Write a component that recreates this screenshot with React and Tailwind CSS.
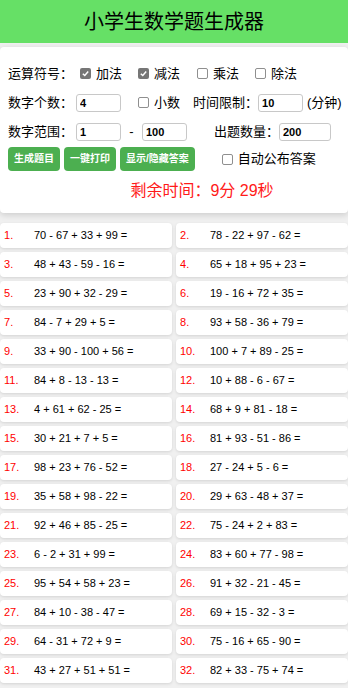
import React from 'react';

const problems = [
  '70 - 67 + 33 + 99 =', '78 - 22 + 97 - 62 =',
  '48 + 43 - 59 - 16 =', '65 + 18 + 95 + 23 =',
  '23 + 90 + 32 - 29 =', '19 - 16 + 72 + 35 =',
  '84 - 7 + 29 + 5 =', '93 + 58 - 36 + 79 =',
  '33 + 90 - 100 + 56 =', '100 + 7 + 89 - 25 =',
  '84 + 8 - 13 - 13 =', '10 + 88 - 6 - 67 =',
  '4 + 61 + 62 - 25 =', '68 + 9 + 81 - 18 =',
  '30 + 21 + 7 + 5 =', '81 + 93 - 51 - 86 =',
  '98 + 23 + 76 - 52 =', '27 - 24 + 5 - 6 =',
  '35 + 58 + 98 - 22 =', '29 + 63 - 48 + 37 =',
  '92 + 46 + 85 - 25 =', '75 - 24 + 2 + 83 =',
  '6 - 2 + 31 + 99 =', '83 + 60 + 77 - 98 =',
  '95 + 54 + 58 + 23 =', '91 + 32 - 21 - 45 =',
  '84 + 10 - 38 - 47 =', '69 + 15 - 32 - 3 =',
  '64 - 31 + 72 + 9 =', '75 - 16 + 65 - 90 =',
  '43 + 27 + 51 + 51 =', '82 + 33 - 75 + 74 =',
];

// small square checkbox like the native one in the screenshot
const Box = ({ checked }) =>
  checked ? (
    <span className="w-[11px] h-[11px] rounded-[2px] bg-[#767676] flex items-center justify-center shrink-0">
      <svg width="9" height="9" viewBox="0 0 10 10">
        <path d="M2 5.2 L4.2 7.3 L8 2.8" stroke="white" strokeWidth="1.6" fill="none" />
      </svg>
    </span>
  ) : (
    <span className="w-[11px] h-[11px] rounded-[2px] border border-[#8f8f8f] bg-white shrink-0" />
  );

const Check = ({ checked, label, className = '' }) => (
  <label className={`flex items-center gap-[5px] shrink-0 whitespace-nowrap ${className}`}>
    <Box checked={checked} />
    <span>{label}</span>
  </label>
);

const Field = ({ value, w = 'w-[45px]', className = '' }) => (
  <input
    readOnly
    value={value}
    className={`${w} shrink-0 h-[18px] border border-[#c8c8c8] rounded-[3px] px-[3px] text-[11px] font-bold text-black bg-white outline-none ${className}`}
  />
);

const Label = ({ children, className = '' }) => (
  <span className={`shrink-0 whitespace-nowrap ${className}`}>{children}</span>
);

const Btn = ({ children }) => (
  <button className="h-[24px] px-[6px] rounded-[4px] bg-[#4caf50] text-white text-[10px] font-bold leading-none shrink-0 whitespace-nowrap">
    {children}
  </button>
);

export default function App() {
  return (
    <div
      className="min-h-screen bg-[#f0f0f0] text-black overflow-hidden"
      style={{ fontFamily: '"Liberation Sans", "Noto Sans CJK SC", sans-serif' }}
    >
      <header className="h-[43px] bg-[#66e066] flex items-center justify-center">
        <h1 className="text-[20px] font-normal">小学生数学题生成器</h1>
      </header>

      <div className="mt-[4px] bg-white rounded-[4px] shadow-[0_2px_6px_rgba(0,0,0,0.15)] pt-[12px] pb-[11px] px-[8px] text-[13px]">
        <div className="h-[29px] flex items-center">
          <Label className="w-[72px]">运算符号：</Label>
          <Check checked label="加法" className="mr-[16px]" />
          <Check checked label="减法" className="mr-[17px]" />
          <Check label="乘法" className="mr-[16px]" />
          <Check label="除法" />
        </div>

        <div className="h-[29px] flex items-center">
          <Label className="w-[68px]">数字个数：</Label>
          <Field value="4" />
          <Check label="小数" className="ml-[17px] mr-[13px]" />
          <Label className="w-[65px]">时间限制：</Label>
          <Field value="10" />
          <Label className="ml-[4px]">(分钟)</Label>
        </div>

        <div className="h-[29px] flex items-center">
          <Label className="w-[68px]">数字范围：</Label>
          <Field value="1" />
          <Label className="w-[21px] text-center">-</Label>
          <Field value="100" />
          <Label className="ml-[27px] w-[65px]">出题数量：</Label>
          <Field value="200" w="w-[52px]" />
        </div>

        <div className="flex items-center gap-[4px] mt-[1px]">
          <Btn>生成题目</Btn>
          <Btn>一键打印</Btn>
          <Btn>显示/隐藏答案</Btn>
          <Check label="自动公布答案" className="ml-[23px]" />
        </div>

        <div className="mt-[9px] h-[22px] flex items-center justify-center pl-[56px] text-[16px] text-[#ff1a1a]">
          剩余时间：9分 29秒
        </div>
      </div>

      <div className="mt-[10px] grid grid-cols-2 gap-x-[4px] gap-y-[4px]">
        {problems.map((p, i) => (
          <div
            key={i}
            className="h-[25px] bg-white rounded-[4px] shadow-[0_1px_3px_rgba(0,0,0,0.12)] flex items-center text-[11px]"
          >
            <span className="w-[34px] pl-[4px] text-[#ff0000]">{i + 1}.</span>
            <span>{p}</span>
          </div>
        ))}
      </div>
    </div>
  );
}
